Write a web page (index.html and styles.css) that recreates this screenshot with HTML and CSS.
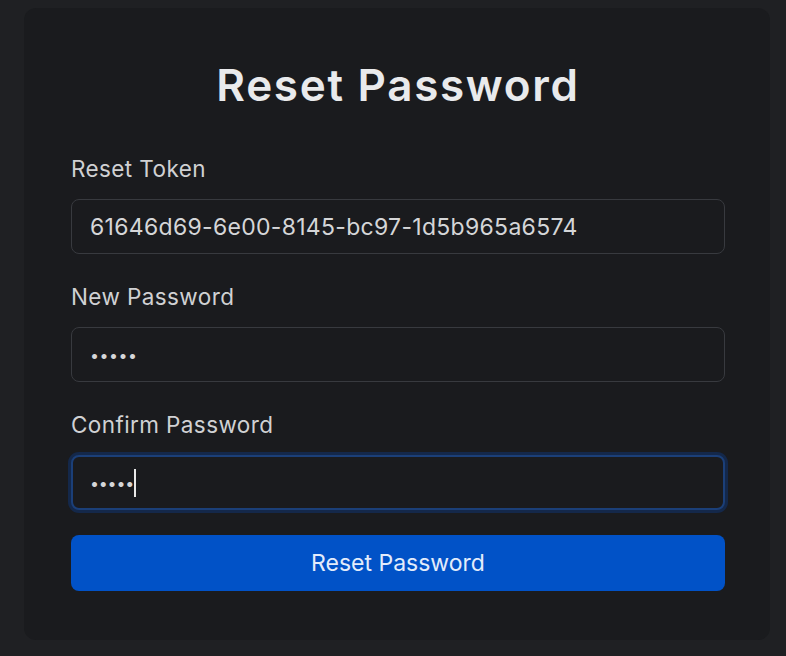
FILE: index.html
```html
<!DOCTYPE html>
<html lang="en">
<head>
<meta charset="utf-8">
<title>Reset Password</title>
<link rel="stylesheet" href="styles.css">
</head>
<body>
<main class="page">
  <form class="card">
    <h1 class="title">Reset Password</h1>
    <div class="field">
      <label class="label" for="token">Reset Token</label>
      <input class="input" id="token" type="text" value="61646d69-6e00-8145-bc97-1d5b965a6574">
    </div>
    <div class="field">
      <label class="label" for="pw">New Password</label>
      <input class="input input-pw" id="pw" type="password" value="12345">
    </div>
    <div class="field">
      <label class="label" for="confirm">Confirm Password</label>
      <div class="input input-focus" id="confirm" role="textbox"><span class="dots">•••••</span><span class="caret"></span></div>
    </div>
    <button class="btn" type="button">Reset Password</button>
  </form>
</main>
</body>
</html>
```

FILE: styles.css
```css
* { box-sizing: border-box; }
html, body { margin: 0; padding: 0; }
body {
  background: #1f2023;
  font-family: Inter, "Noto Sans", sans-serif;
  color: #c9cacd;
  width: 786px;
  height: 656px;
  overflow: hidden;
}
.page {
  padding: 8px 16px 16px 24px;
}
.card {
  background: #1a1b1e;
  border-radius: 12px;
  width: 746px;
  height: 632px;
  padding: 50px 45px 0 47px;
  display: flex;
  flex-direction: column;
}
.title {
  margin: 0 0 44px 0;
  text-align: center;
  font-size: 44px;
  font-weight: 600;
  color: #e9eaec;
  line-height: 54px;
  letter-spacing: 1.7px;
}
.field {
  display: flex;
  flex-direction: column;
  gap: 17px;
}
.field + .field {
  margin-top: 30px;
}
.label {
  font-size: 22.5px;
  line-height: 26px;
  letter-spacing: 0.4px;
  color: #d0d1d3;
}
.input {
  height: 55px;
  width: 100%;
  background: #1a1b1e;
  border: 1px solid #383a3f;
  border-radius: 8px;
  padding: 0 18px;
  font-family: inherit;
  font-size: 23px;
  letter-spacing: 0.3px;
  color: #d5d6d8;
  outline: none;
  display: flex;
  align-items: center;
}
.input-pw {
  font-size: 16px;
  letter-spacing: 0.5px;
}
.input-focus {
  border: 2px solid #1b3f78;
  box-shadow: 0 0 0 3px #14284a;
  padding-left: 17px;
}
.dots {
  font-size: 16px;
  letter-spacing: -0.2px;
  color: #d5d6d8;
}
.caret {
  display: inline-block;
  width: 2px;
  height: 28px;
  background: #e8e8e8;
  margin-left: 0;
}
.btn {
  margin-top: 25px;
  height: 56px;
  width: 100%;
  border: none;
  border-radius: 8px;
  background: #0152c7;
  color: #e3ecfb;
  font-family: inherit;
  font-size: 23px;
}
```
